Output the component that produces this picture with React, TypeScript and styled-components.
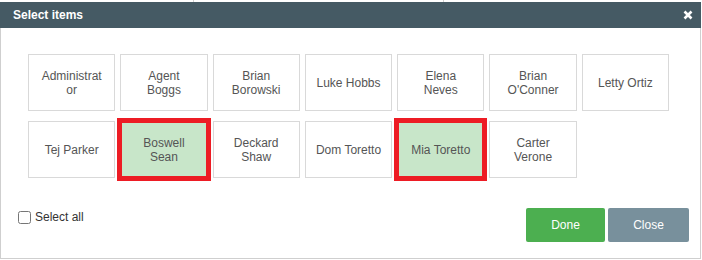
import React, { useState } from 'react';
import styled, { createGlobalStyle } from 'styled-components';

const GlobalStyle = createGlobalStyle`
    html, body {
        margin: 0;
        padding: 0;
        background: #ffffff;
        font-family: "Liberation Sans", Arial, sans-serif;
    }
    body {
        /* faint grid of the page that lies behind the dialog */
        background-image:
            linear-gradient(#d0d0d0, #d0d0d0),
            linear-gradient(#d0d0d0, #d0d0d0);
        background-size: 1px 2px, 1px 2px;
        background-position: 193px 0, 443px 0;
        background-repeat: no-repeat;
    }
`;

// Fenêtre du dialogue
const Dialog = styled.div`
    margin-top: 2px;
    width: 701px;
    height: 257px;
    box-sizing: border-box;
    display: flex;
    flex-direction: column;
    background: #ffffff;
    border: 1px solid #cfcfcf;
    border-top: none;
    box-shadow: 0 1px 0 #bdbdbd;
`;

const Header = styled.div`
    height: 26px;
    margin: 0 -1px;
    padding: 0 8px 0 13px;
    display: flex;
    align-items: center;
    justify-content: space-between;
    background: #455a64;
    color: #ffffff;
`;

const Title = styled.h1`
    margin: 0;
    font-size: 12px;
    font-weight: bold;
`;

const CloseIcon = styled.button`
    border: none;
    background: none;
    padding: 0;
    width: 10px;
    height: 10px;
    display: flex;
    cursor: pointer;
`;

const Body = styled.div`
    padding: 26px 0 0 27px;
`;

const Grid = styled.div`
    width: 641px;
    display: grid;
    grid-template-columns: repeat(7, 1fr);
    column-gap: 5px;
    row-gap: 10px;
`;

const Tile = styled.button<{ $selected: boolean }>`
    height: 57px;
    box-sizing: border-box;
    padding: 0 9px;
    display: flex;
    align-items: center;
    justify-content: center;
    text-align: center;
    font-family: "Liberation Sans", Arial, sans-serif;
    font-size: 12px;
    line-height: 14px;
    color: #555555;
    background: ${(p) => (p.$selected ? '#c8e6c9' : '#ffffff')};
    border: 1px solid #d9d9d9;
    outline: ${(p) => (p.$selected ? '5px solid #ed1c24' : 'none')};
    outline-offset: -2px;
    cursor: pointer;
`;

const Footer = styled.div`
    margin-top: auto;
    padding: 0 11px 16px 16px;
    display: flex;
    align-items: flex-start;
    justify-content: space-between;
`;

const SelectAll = styled.label`
    margin-top: 2px;
    display: flex;
    align-items: center;
    font-size: 12px;
    line-height: 14px;
    color: #333333;
    cursor: pointer;

    input {
        width: 13px;
        height: 13px;
        margin: 0 4px 0 1px;
    }
`;

const Actions = styled.div`
    display: flex;
    gap: 3px;
`;

const ActionButton = styled.button<{ $tone: 'done' | 'close' }>`
    width: ${(p) => (p.$tone === 'done' ? '79px' : '81px')};
    height: 34px;
    border: none;
    border-radius: 2px;
    font-family: "Liberation Sans", Arial, sans-serif;
    font-size: 12px;
    color: #ffffff;
    background: ${(p) => (p.$tone === 'done' ? '#4caf50' : '#78909c')};
    cursor: pointer;
`;

const people = [
    'Administrator',
    'Agent Boggs',
    'Brian Borowski',
    'Luke Hobbs',
    'Elena Neves',
    "Brian O'Conner",
    'Letty Ortiz',
    'Tej Parker',
    'Boswell Sean',
    'Deckard Shaw',
    'Dom Toretto',
    'Mia Toretto',
    'Carter Verone',
];

// "Administrator" is broken in the middle in the screenshot
const labelOf = (name: string) => (name === 'Administrator' ? 'Administrat or' : name);

const App = () => {
    const [selected, setSelected] = useState<string[]>(['Boswell Sean', 'Mia Toretto']);
    const [all, setAll] = useState(false);

    const toggle = (name: string) =>
        setSelected((s) => (s.includes(name) ? s.filter((n) => n !== name) : [...s, name]));

    return (
        <>
            <GlobalStyle />
            <Dialog>
                <Header>
                    <Title>Select items</Title>
                    <CloseIcon aria-label="Close">
                        <svg width="10" height="10" viewBox="0 0 10 10">
                            <path d="M1.5 1.5 L8.5 8.5 M8.5 1.5 L1.5 8.5" stroke="#ffffff" strokeWidth="2.6" />
                        </svg>
                    </CloseIcon>
                </Header>

                <Body>
                    <Grid>
                        {people.map((name) => (
                            <Tile key={name} $selected={selected.includes(name)} onClick={() => toggle(name)}>
                                {labelOf(name)}
                            </Tile>
                        ))}
                    </Grid>
                </Body>

                <Footer>
                    <SelectAll>
                        <input
                            type="checkbox"
                            checked={all}
                            onChange={(e) => {
                                setAll(e.target.checked);
                                setSelected(e.target.checked ? people : []);
                            }}
                        />
                        Select all
                    </SelectAll>
                    <Actions>
                        <ActionButton $tone="done">Done</ActionButton>
                        <ActionButton $tone="close">Close</ActionButton>
                    </Actions>
                </Footer>
            </Dialog>
        </>
    );
};

export default App;
